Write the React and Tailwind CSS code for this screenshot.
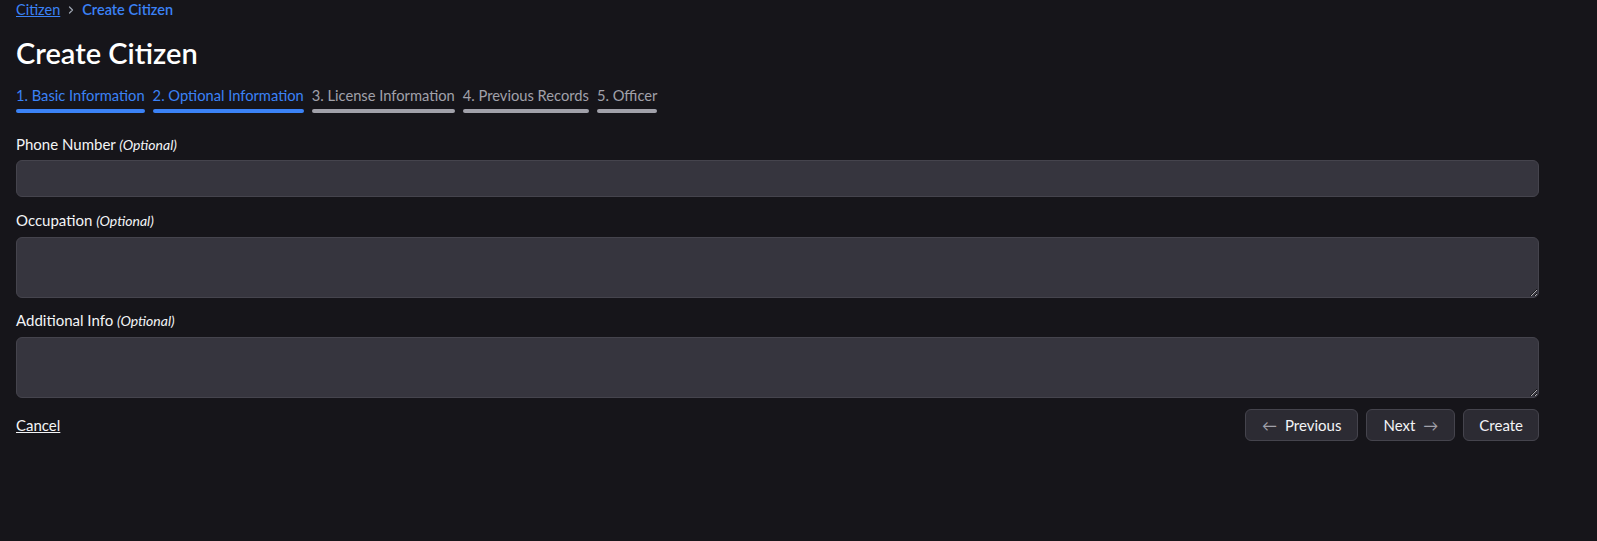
import React from "react";

const steps = [
  { label: "1. Basic Information", active: true },
  { label: "2. Optional Information", active: true },
  { label: "3. License Information", active: false },
  { label: "4. Previous Records", active: false },
  { label: "5. Officer", active: false },
];

const Label = ({ children }) => (
  <label className="block text-[15px] leading-5 text-gray-100">
    {children} <span className="italic text-[14px]">(Optional)</span>
  </label>
);

export default function App() {
  return (
    <div
      className="min-h-screen w-full bg-[#16151a] text-white pl-4"
      style={{ fontFamily: "Lato, 'Noto Sans', sans-serif" }}
    >
      <div className="w-[1523px]">
        <nav className="flex items-center gap-[5px] h-5 text-[14.5px]">
          <a href="#" className="text-[#3b82f6] underline">
            Citizen
          </a>
          <svg width="12" height="12" viewBox="0 0 24 24" fill="none" stroke="#9ca3af" strokeWidth="2.5" strokeLinecap="round" strokeLinejoin="round">
            <path d="M9 6l6 6-6 6" />
          </svg>
          <span className="text-[#3b82f6] font-semibold">Create Citizen</span>
        </nav>

        <h1 className="mt-[18px] text-[29px] leading-[30px] font-semibold">Create Citizen</h1>

        <div className="mt-[17px] flex gap-2">
          {steps.map((s) => (
            <div key={s.label} className="flex flex-col">
              <span className={`text-[14.7px] leading-5 ${s.active ? "text-[#3b82f6]" : "text-[#a1a1aa]"}`}>
                {s.label}
              </span>
              <div className={`mt-[4px] h-1 rounded-full ${s.active ? "bg-[#3b82f6]" : "bg-[#a1a1aa]"}`} />
            </div>
          ))}
        </div>

        <div className="mt-[21px]">
          <Label>Phone Number</Label>
          <input className="mt-[5px] block w-full h-[37px] rounded-md bg-[#36353e] border border-[#45444d] px-3 outline-none" />
        </div>

        <div className="mt-[13px]">
          <Label>Occupation</Label>
          <textarea className="mt-[6px] block w-full h-[61px] rounded-md bg-[#36353e] border border-[#45444d] px-3 py-2 outline-none" />
        </div>

        <div className="mt-[12px]">
          <Label>Additional Info</Label>
          <textarea className="mt-[6px] block w-full h-[61px] rounded-md bg-[#36353e] border border-[#45444d] px-3 py-2 outline-none" />
        </div>

        <div className="mt-[11px] flex items-center justify-between">
          <a href="#" className="text-[15px] underline text-gray-100">
            Cancel
          </a>
          <div className="flex gap-2">
            <button className="h-8 px-4 flex items-center gap-2 rounded-md bg-[#2c2b33] border border-[#45444d] text-[15px] text-gray-100">
              <span className="text-[#a1a1aa]">←</span> Previous
            </button>
            <button className="h-8 px-4 flex items-center gap-2 rounded-md bg-[#2c2b33] border border-[#45444d] text-[15px] text-gray-100">
              Next <span className="text-[#a1a1aa]">→</span>
            </button>
            <button className="h-8 px-[15px] flex items-center rounded-md bg-[#2c2b33] border border-[#45444d] text-[15px] text-gray-100">
              Create
            </button>
          </div>
        </div>
      </div>
    </div>
  );
}
